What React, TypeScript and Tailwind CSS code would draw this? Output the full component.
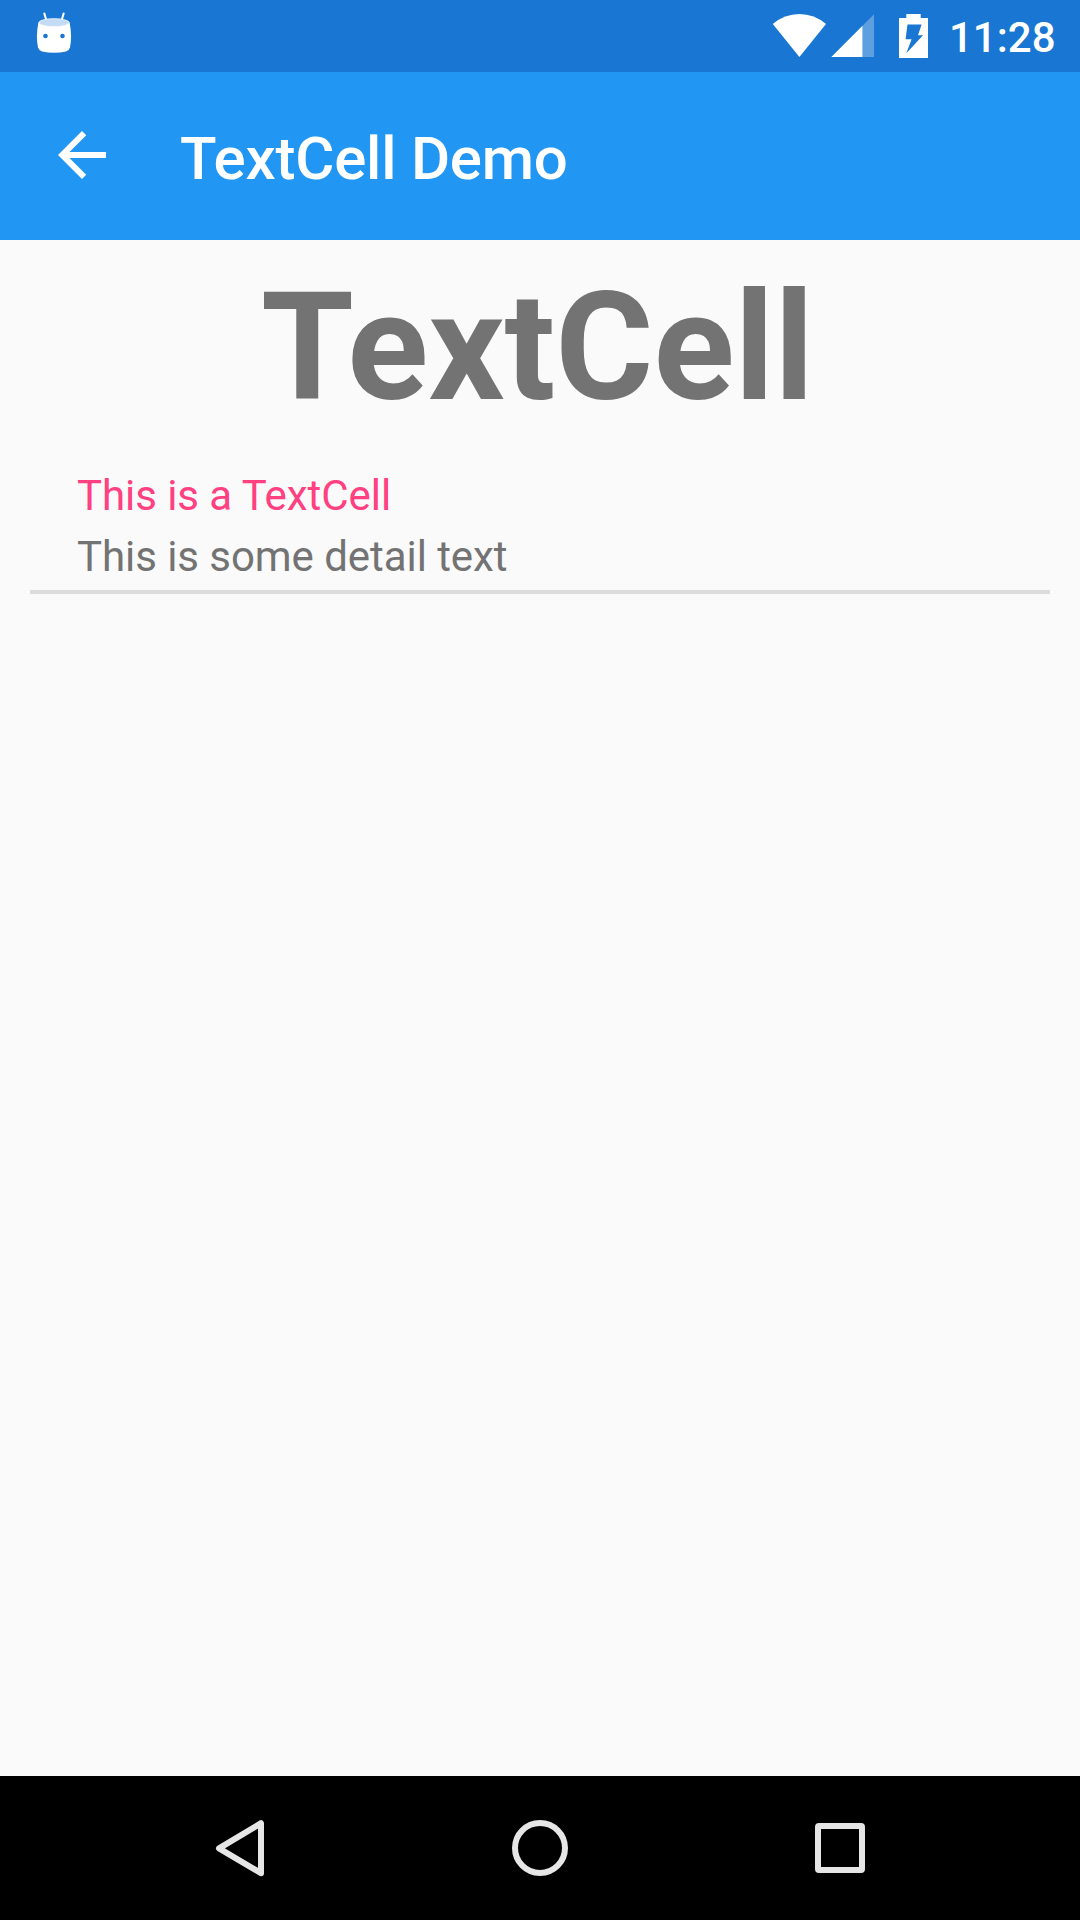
function MascotIcon() {
  return (
    <svg className="h-[72px] w-[48px]" viewBox="30 0 48 72" fill="none">
      <path d="M44.3 13.4L46.4 20.5M63.7 13.4L61.6 20.5" stroke="#fff" strokeWidth="2" strokeLinecap="round" />
      <path d="M38.4 22.5Q35.7 36 38 47.5Q38.9 50.5 42 51.5Q54 54.2 66 51.5Q69.1 50.5 70 47.5Q72.3 36 69.6 22.5Z" fill="#fff" />
      <ellipse cx="54" cy="22.6" rx="15.2" ry="4" fill="#c5dbf4" stroke="#fff" strokeWidth="0.6" />
      <circle cx="45.5" cy="36" r="2.3" fill="#1976d2" />
      <circle cx="62.5" cy="36" r="2.3" fill="#1976d2" />
    </svg>
  );
}

function StatusIcons() {
  return (
    <svg className="h-[72px] w-[160px]" viewBox="770 0 160 72" fill="#fff">
      <path d="M799.4 57L772.8 24Q784.5 14 799.4 14T826 24Z" />
      <path d="M831.3 57L862.5 25.8V57Z" />
      <path d="M862.5 25.8L874 14.3V57H862.5Z" fillOpacity="0.3" />
      <path
        fillRule="evenodd"
        d="M906.3 14H920.7V18H928V58H899V18H906.3ZM907.5 24.6L905.6 39.2H911.6L906.3 53.2L923 35.2H918L921.6 24.6Z"
      />
    </svg>
  );
}

function StatusBar() {
  return (
    <div className="flex h-[72px] items-center justify-between bg-[#1976d2] pl-[30px]">
      <MascotIcon />
      <div className="flex items-center gap-[19px]">
        <StatusIcons />
        <span className="w-[131px] pt-[3px] text-[42px] leading-[48px] font-medium text-white">11:28</span>
      </div>
    </div>
  );
}

function AppBar() {
  return (
    <header className="flex h-[168px] items-start bg-[#2196f3] pl-[46px] text-white">
      <svg className="mt-[47px] h-[72px] w-[72px]" viewBox="0 0 24 24" fill="currentColor">
        <path d="M20 11H7.83l5.59-5.59L12 4l-8 8 8 8 1.41-1.41L7.83 13H20v-2z" />
      </svg>
      <h1 className="mt-[52px] ml-[62px] text-[60px] leading-[70px] font-medium tracking-[-0.22px]">TextCell Demo</h1>
    </header>
  );
}

function NavBar() {
  return (
    <nav className="grid h-[144px] grid-cols-3 justify-items-center bg-black px-[90px] pt-[36px]">
      <svg className="h-[72px] w-[72px]" viewBox="204 1812 72 72" fill="none" stroke="#e6e6e6" strokeWidth="6" strokeLinejoin="round">
        <path d="M219 1848.3L261 1823.2V1873.2Z" />
      </svg>
      <svg className="h-[72px] w-[72px]" viewBox="0 0 72 72" fill="none" stroke="#e6e6e6" strokeWidth="6">
        <circle cx="36" cy="36" r="25" />
      </svg>
      <svg className="h-[72px] w-[72px]" viewBox="0 0 72 72" fill="#e6e6e6" fillRule="evenodd">
        <path d="M15 11H57Q61 11 61 15V57Q61 61 57 61H15Q11 61 11 57V15Q11 11 15 11ZM17 17V55H55V17Z" />
      </svg>
    </nav>
  );
}

export default function App() {
  return (
    <div className="flex h-[1920px] w-[1080px] flex-col overflow-hidden bg-[#fafafa] font-[Roboto,sans-serif]">
      <StatusBar />
      <AppBar />
      <main className="flex-1 px-[30px] pt-[20px]">
        <h2 className="pr-[5px] text-center text-[150px] leading-[176px] font-bold text-[#737373]">TextCell</h2>
        <div className="h-[158px] border-b-4 border-[#dcdcdc] pt-[29px] pl-[47px] text-[42px] leading-[61px] tracking-[-0.06px]">
          <p className="text-[#ff4081]">This is a TextCell</p>
          <p className="text-[#737373]">This is some detail text</p>
        </div>
      </main>
      <NavBar />
    </div>
  );
}
